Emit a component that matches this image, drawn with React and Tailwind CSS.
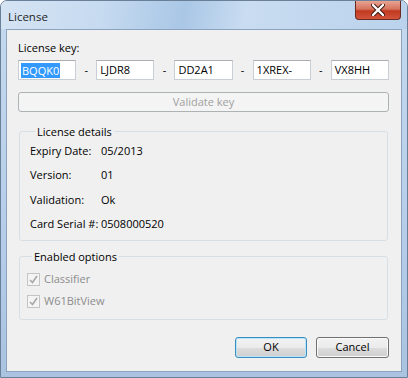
import React from 'react';

const font = { fontFamily: '"Open Sans", "Noto Sans", sans-serif' };

const KeyInput = ({ value, selected }) => (
  <div className="flex-1 h-[20px] bg-white border border-[#c9ced6] border-t-[#abadb3] flex items-center pl-[2px] text-[11px] text-black">
    {selected ? <span className="bg-[#3399ff] text-white leading-[15px] px-[1px]">{value}</span> : <span className="px-[1px]">{value}</span>}
  </div>
);

const Dash = () => <div className="w-[20px] text-center text-[11px] text-black">-</div>;

const Check = ({ label }) => (
  <div className="h-[22px] flex items-center gap-[4px]">
    <div className="w-[13px] h-[13px] border border-[#c4c4c4] bg-[#f4f4f4] flex items-center justify-center">
      <svg width="9" height="9" viewBox="0 0 9 9">
        <path d="M1 5 L3.5 7.5 L8 1" fill="none" stroke="#a8a8a8" strokeWidth="1.6" />
      </svg>
    </div>
    <span className="text-[#8d8d8d]">{label}</span>
  </div>
);

const Row = ({ label, value, tall }) => (
  <div className={`flex items-center whitespace-nowrap ${tall ? 'h-[25px]' : 'h-[24px]'}`}>
    <span className="w-[71px] shrink-0">{label}</span>
    <span>{value}</span>
  </div>
);

export default function App() {
  return (
    <div style={font} className="w-[408px] h-[378px] text-[11px] text-black bg-white">
      <div className="w-[408px] h-[378px] rounded-t-[7px] border border-[#6a7f98] bg-[linear-gradient(180deg,#d9e7f5_0%,#c3d8ee_8%,#b9d0ea_50%,#a9c3e0_100%)] flex flex-col">
        {/* Title bar */}
        <div className="h-[28px] flex items-start shrink-0 bg-[linear-gradient(100deg,#d5e4f3_0%,#c6daf0_25%,#a9c7e6_45%,#c9dcf1_60%,#bad2ec_100%)] rounded-t-[6px]">
          <span className="pl-[7px] pt-[7px] text-[11.5px] text-[#1e1e1e]">License</span>
          <div className="ml-auto mr-[6px] w-[46px] h-[19px] rounded-b-[4px] border border-t-0 border-[#6b2a22] bg-[linear-gradient(180deg,#e8a493_0%,#d6735d_45%,#c0391f_55%,#d2543b_100%)] flex items-center justify-center">
            <svg width="14" height="12" viewBox="0 0 14 12">
              <path d="M2 1 L12 11 M12 1 L2 11" stroke="#3b1510" strokeWidth="4.2" strokeLinecap="round" />
              <path d="M2 1 L12 11 M12 1 L2 11" stroke="#ffffff" strokeWidth="2.4" strokeLinecap="round" />
            </svg>
          </div>
        </div>

        {/* Client area */}
        <div className="ml-[5px] w-[396px] h-[343px] border border-[#8ca3bf] bg-[#f0f0f0] pl-[11px] pr-[12px] pt-[10px] flex flex-col">
          <div className="h-[16px] leading-[16px]">License key:</div>

          <div className="mt-[4px] flex items-center">
            <KeyInput value="BQQK0" selected />
            <Dash />
            <KeyInput value="LJDR8" />
            <Dash />
            <KeyInput value="DD2A1" />
            <Dash />
            <KeyInput value="1XREX-" />
            <Dash />
            <KeyInput value="VX8HH" />
          </div>

          <button className="mt-[12px] h-[20px] w-full rounded-[3px] border border-[#adb2b5] bg-[#f4f4f4] text-[#a0a0a0] text-[11px]">
            Validate key
          </button>

          <fieldset className="mt-[12px] border border-[#d5dfe5] rounded-[3px] pl-[10px] pb-[3px] mx-[1px]">
            <legend className="ml-[5px] px-[2px] leading-[15px]">License details</legend>
            <Row label="Expiry Date:" value="05/2013" />
            <Row label="Version:" value="01" tall />
            <Row label="Validation:" value="Ok" />
            <Row label="Card Serial #:" value="0508000520" tall />
          </fieldset>

          <fieldset className="mt-[8px] border border-[#d5dfe5] rounded-[3px] pl-[7px] pt-[4px] pb-[7px] mx-[1px]">
            <legend className="ml-[5px] px-[2px] leading-[15px]">Enabled options</legend>
            <Check label="Classifier" />
            <Check label="W61BitView" />
          </fieldset>

          <div className="mt-[17px] flex justify-end gap-[9px]">
            <button className="w-[72px] h-[21px] rounded-[3px] border border-[#3c8dbf] shadow-[inset_0_0_0_1px_#b6e6fa] bg-[linear-gradient(180deg,#f2f2f2_0%,#ebebeb_50%,#dddddd_50%,#cfcfcf_100%)] text-[11px]">
              OK
            </button>
            <button className="w-[73px] h-[21px] rounded-[3px] border border-[#707070] shadow-[inset_0_0_0_1px_#fbfbfb] bg-[linear-gradient(180deg,#f2f2f2_0%,#ebebeb_50%,#dddddd_50%,#cfcfcf_100%)] text-[11px]">
              Cancel
            </button>
          </div>
        </div>
      </div>
    </div>
  );
}
